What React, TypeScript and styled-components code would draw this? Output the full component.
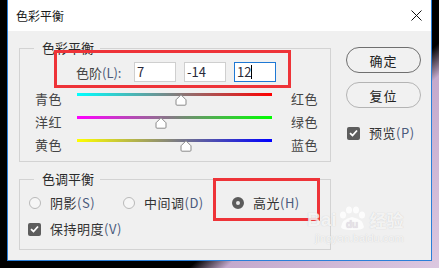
import React from "react";
import styled, { createGlobalStyle } from "styled-components";

const GlobalStyle = createGlobalStyle`
    html, body {
        margin: 0;
        padding: 0;
        width: 439px;
        height: 268px;
        overflow: hidden;
        background: linear-gradient(138deg, #000 66%, #c4a9cc 71%, #dcc8e0 100%);
        font-family: "Noto Sans CJK SC", "Noto Sans", sans-serif;
    }
`

const Window = styled.div`
    position: relative;
    margin-left: 7px;
    width: 425px;
    height: 261px;
    box-sizing: border-box;
    border: 1px solid #2b7fd8;
    border-top: none;
    background: #f0f0f0;
    display: flex;
    flex-direction: column;
`
const TitleBar = styled.div`
    height: 31px;
    background: #fff;
    display: flex;
    align-items: center;
    justify-content: space-between;
    padding: 0 9px 0 8px;
    font-size: 12px;
    color: #1a1a1a;
`
const Body = styled.div`
    display: flex;
    gap: 15px;
    padding: 9px 0 0 11px;
`
const LeftCol = styled.div`
    display: flex;
    flex-direction: column;
    gap: 9px;
    width: 312px;
    flex-shrink: 0;
`
const Group = styled.fieldset<{ $pt: number; $pb: number }>`
    margin: 0;
    width: 312px;
    box-sizing: border-box;
    border: 1px solid #d3d3d3;
    padding: ${p => p.$pt}px 0 ${p => p.$pb}px 9px;
    min-width: 0;
`
const Legend = styled.legend`
    margin-left: 5px;
    padding: 0 6px 0 8px;
    font-size: 13px;
    line-height: 16px;
    color: #2a2a2a;
`
const Hot = styled.span`
    color: #4a5a7c;
`
const LevelRow = styled.div`
    display: flex;
    align-items: center;
    height: 20px;
    padding-left: 47px;
    font-size: 13px;
    color: #444;
`
const LevelLabel = styled.span`
    width: 58px;
    white-space: nowrap;
`
const Field = styled.div<{ $active?: boolean }>`
    width: 42px;
    height: 20px;
    box-sizing: border-box;
    margin-right: 8px;
    border: 1px solid ${p => (p.$active ? "#1e78d4" : "#cfcfcf")};
    background: #fff;
    padding-left: 2px;
    font-size: 13px;
    line-height: 18px;
    color: #2a2a3a;
    display: flex;
    align-items: center;
`
const Caret = styled.span`
    width: 1px;
    height: 14px;
    background: #000;
`
const Sliders = styled.div`
    display: flex;
    flex-direction: column;
    gap: 7px;
    margin-top: 9px;
    padding-left: 6px;
`
const SliderRow = styled.div`
    display: grid;
    grid-template-columns: 42px 195px auto;
    height: 16px;
    font-size: 13px;
    line-height: 16px;
    color: #444;
    letter-spacing: 0.5px;
    white-space: nowrap;
`
const SideLabel = styled.span`
    padding-left: 19px;
`
const Track = styled.div<{ $from: string; $to: string }>`
    position: relative;
    height: 3px;
    margin-top: 2px;
    background: linear-gradient(to right, ${p => p.$from}, ${p => p.$to});
`
const Thumb = styled.svg`
    position: absolute;
    top: 1px;
    width: 12px;
    height: 12px;
    margin-left: -6px;
`
const RadioRow = styled.div`
    display: flex;
    height: 16px;
`
const Option = styled.label<{ $w?: number }>`
    display: flex;
    align-items: center;
    gap: 9px;
    flex-shrink: 0;
    width: ${p => (p.$w ? `${p.$w}px` : "auto")};
    font-size: 13px;
    line-height: 16px;
    color: #333;
    letter-spacing: 0.5px;
    white-space: nowrap;
`
const Radio = styled.span<{ $on?: boolean }>`
    width: 12px;
    height: 12px;
    box-sizing: border-box;
    border-radius: 50%;
    border: ${p => (p.$on ? "4px solid #5b5b5b" : "1px solid #b9b9b9")};
    background: ${p => (p.$on ? "#e8e8e8" : "#f6f6f6")};
`
const Check = styled.span`
    width: 13px;
    height: 13px;
    border-radius: 2px;
    background: #5d5d5d;
    display: flex;
    align-items: center;
    justify-content: center;
`
const CheckRow = styled.div<{ $mt: number; $ml: number }>`
    display: flex;
    height: 16px;
    margin-top: ${p => p.$mt}px;
    margin-left: ${p => p.$ml}px;
`
const RightCol = styled.div`
    display: flex;
    flex-direction: column;
    gap: 9px;
    padding-top: 7px;
`
const Button = styled.div<{ $primary?: boolean }>`
    width: 75px;
    height: 26px;
    box-sizing: border-box;
    border-radius: 13px;
    border: 1px solid ${p => (p.$primary ? "#6f6f6f" : "#b4b4b4")};
    background: #f1f1f1;
    display: flex;
    align-items: center;
    justify-content: center;
    font-size: 13px;
    color: #222;
    letter-spacing: 1px;
`
const Mark = styled.div`
    position: absolute;
    border: 3px solid #ee3338;
    box-sizing: border-box;
`
const Watermark = styled.div`
    position: absolute;
    left: 299px;
    top: 206px;
    display: flex;
    flex-direction: column;
    align-items: flex-end;
    color: rgba(255, 255, 255, 0.8);
    text-shadow: 0 0 1px rgba(120, 120, 120, 0.35);
    pointer-events: none;
`
const WmTop = styled.div`
    display: flex;
    align-items: flex-end;
    font-family: "Liberation Sans", sans-serif;
    font-weight: bold;
    font-size: 19px;
    line-height: 20px;
`
const WmCn = styled.span`
    font-family: "Noto Sans CJK SC", sans-serif;
    font-size: 17px;
    margin-left: 3px;
`
const WmUrl = styled.div`
    font-family: "Liberation Sans", sans-serif;
    font-size: 11px;
    line-height: 14px;
    margin-top: 1px;
`

const sliders = [
    { left: "青色", right: "红色", from: "#00ffff", to: "#ff0000", value: 7 },
    { left: "洋红", right: "绿色", from: "#ff00ff", to: "#00ff00", value: -14 },
    { left: "黄色", right: "蓝色", from: "#ffff00", to: "#0000ff", value: 12 },
]

const Tick = () => (
    <svg width="9" height="8" viewBox="0 0 9 8">
        <path d="M1 4.2 L3.5 6.5 L8 1.5" fill="none" stroke="#fff" strokeWidth="1.8" />
    </svg>
)

const App = () => {
    return (
        <>
            <GlobalStyle />
            <Window>
                <TitleBar>
                    <span>色彩平衡</span>
                    <svg width="11" height="11" viewBox="0 0 11 11">
                        <path d="M0.5 0.5 L10.5 10.5 M10.5 0.5 L0.5 10.5" stroke="#111" strokeWidth="1" />
                    </svg>
                </TitleBar>
                <Body>
                    <LeftCol>
                        <Group $pt={6} $pb={8}>
                            <Legend>色彩平衡</Legend>
                            <LevelRow>
                                <LevelLabel>色阶<Hot>(L):</Hot></LevelLabel>
                                <Field>7</Field>
                                <Field>-14</Field>
                                <Field $active>12<Caret /></Field>
                            </LevelRow>
                            <Sliders>
                                {sliders.map(s => (
                                    <SliderRow key={s.left}>
                                        <span>{s.left}</span>
                                        <Track $from={s.from} $to={s.to}>
                                            <Thumb viewBox="0 0 12 12" style={{ left: `${((s.value + 100) / 200) * 100}%` }}>
                                                <path d="M6 0.8 L11 5.8 L11 10.2 Q11 11.2 10 11.2 L2 11.2 Q1 11.2 1 10.2 L1 5.8 Z" fill="#fff" stroke="#8a8a8a" strokeWidth="1" />
                                            </Thumb>
                                        </Track>
                                        <SideLabel>{s.right}</SideLabel>
                                    </SliderRow>
                                ))}
                            </Sliders>
                        </Group>
                        <Group $pt={8} $pb={12}>
                            <Legend>色调平衡</Legend>
                            <RadioRow>
                                <Option $w={94}><Radio /><span>阴影<Hot>(S)</Hot></span></Option>
                                <Option $w={109}><Radio /><span>中间调<Hot>(D)</Hot></span></Option>
                                <Option><Radio $on /><span>高光<Hot>(H)</Hot></span></Option>
                            </RadioRow>
                            <CheckRow $mt={10} $ml={-1}>
                                <Option><Check><Tick /></Check><span>保持明度<Hot>(V)</Hot></span></Option>
                            </CheckRow>
                        </Group>
                    </LeftCol>
                    <RightCol>
                        <Button $primary>确定</Button>
                        <Button>复位</Button>
                        <CheckRow $mt={8} $ml={1}>
                            <Option><Check><Tick /></Check><span>预览<Hot>(P)</Hot></span></Option>
                        </CheckRow>
                    </RightCol>
                </Body>
                <Mark style={{ left: 46, top: 50, width: 237, height: 38 }} />
                <Mark style={{ left: 205, top: 178, width: 107, height: 43 }} />
                <Watermark>
                    <WmTop>
                        Bai
                        <svg width="30" height="24" viewBox="0 0 30 24">
                            <ellipse cx="6" cy="9" rx="3" ry="3.5" fill="rgba(255,255,255,0.8)" />
                            <ellipse cx="12" cy="4" rx="3" ry="3.5" fill="rgba(255,255,255,0.8)" />
                            <ellipse cx="19" cy="4" rx="3" ry="3.5" fill="rgba(255,255,255,0.8)" />
                            <ellipse cx="25" cy="9" rx="3" ry="3.5" fill="rgba(255,255,255,0.8)" />
                            <path d="M4 21 Q5 13 15 11 Q26 13 27 21 Q27 24 15 24 Q4 24 4 21 Z" fill="rgba(255,255,255,0.8)" />
                            <text x="15" y="22" textAnchor="middle" fontSize="10" fontFamily="Liberation Sans" fontWeight="bold" fill="#e6e0e8">du</text>
                        </svg>
                        <WmCn>经验</WmCn>
                    </WmTop>
                    <WmUrl>jingyan.baidu.com</WmUrl>
                </Watermark>
            </Window>
        </>
    )
}
export default App;
